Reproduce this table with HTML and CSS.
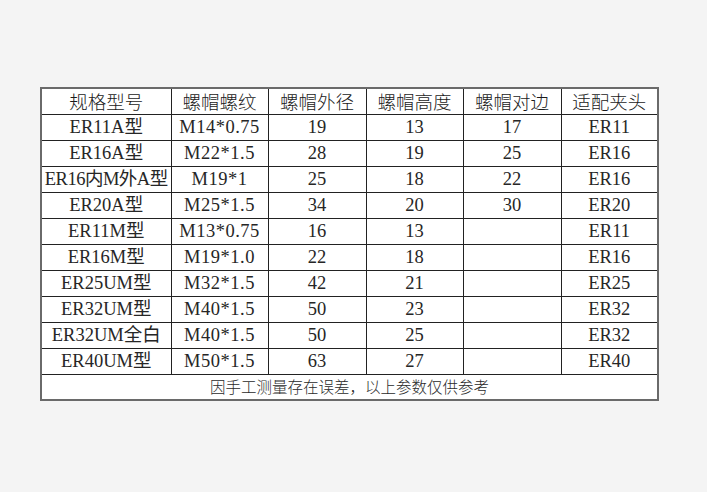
FILE: index.html
```html
<!DOCTYPE html>
<html lang="zh">
<head>
<meta charset="utf-8">
<link rel="stylesheet" href="styles.css">
</head>
<body>
<div class="page">
<table class="spec">
<colgroup>
<col class="c1"><col class="c2"><col class="c3"><col class="c4"><col class="c5"><col class="c6">
</colgroup>
<thead>
<tr class="head"><th>规格型号</th><th>螺帽螺纹</th><th>螺帽外径</th><th>螺帽高度</th><th>螺帽对边</th><th>适配夹头</th></tr>
</thead>
<tbody>
<tr><td>ER11A型</td><td class="thread">M14*0.75</td><td>19</td><td>13</td><td>17</td><td>ER11</td></tr>
<tr><td>ER16A型</td><td class="thread">M22*1.5</td><td>28</td><td>19</td><td>25</td><td>ER16</td></tr>
<tr><td class="tight">ER16内M外A型</td><td class="thread">M19*1</td><td>25</td><td>18</td><td>22</td><td>ER16</td></tr>
<tr><td>ER20A型</td><td class="thread">M25*1.5</td><td>34</td><td>20</td><td>30</td><td>ER20</td></tr>
<tr><td>ER11M型</td><td class="thread">M13*0.75</td><td>16</td><td>13</td><td></td><td>ER11</td></tr>
<tr><td>ER16M型</td><td class="thread">M19*1.0</td><td>22</td><td>18</td><td></td><td>ER16</td></tr>
<tr><td>ER25UM型</td><td class="thread">M32*1.5</td><td>42</td><td>21</td><td></td><td>ER25</td></tr>
<tr><td>ER32UM型</td><td class="thread">M40*1.5</td><td>50</td><td>23</td><td></td><td>ER32</td></tr>
<tr><td>ER32UM全白</td><td class="thread">M40*1.5</td><td>50</td><td>25</td><td></td><td>ER32</td></tr>
<tr><td>ER40UM型</td><td class="thread">M50*1.5</td><td>63</td><td>27</td><td></td><td>ER40</td></tr>
<tr class="foot"><td colspan="6">因手工测量存在误差，以上参数仅供参考</td></tr>
</tbody>
</table>
</div>
</body>
</html>
```
FILE: styles.css
```css
html, body {
  margin: 0;
  padding: 0;
  background: #f4f4f4;
}
.page {
  padding: 87px 0 0 40px;
}
.spec {
  border-collapse: collapse;
  table-layout: fixed;
  width: 619px;
  background: #fff;
  border: 2px solid #6a6a6a;
  color: #262626;
  font-family: "Liberation Serif", "Noto Sans CJK SC", serif;
  font-size: 18.5px;
}
.c1 { width: 130px; }
.c2 { width: 97px; }
.c3 { width: 98px; }
.c4 { width: 97px; }
.c5 { width: 98px; }
.c6 { width: 97px; }
.spec th, .spec td {
  border: 1px solid #222;
  padding: 0;
  text-align: center;
  vertical-align: middle;
  white-space: nowrap;
  overflow: hidden;
  line-height: 1;
}
.spec td:nth-child(3) { border-left-color: #555; }
.spec th {
  font-family: "Noto Sans CJK SC", sans-serif;
  font-weight: 300;
  font-size: 18.5px;
  height: 25px;
  color: #1a1a1a;
}
.spec tbody tr { height: 25.8px; }
.spec td { height: 25px; }
.spec td.thread { letter-spacing: 0.5px; }
.spec td.tight { letter-spacing: -0.5px; }
.spec tr.foot td {
  height: 21px;
  font-family: "Noto Sans CJK SC", sans-serif;
  font-weight: 300;
  font-size: 15.5px;
  color: #2a2a2a;
  letter-spacing: 0;
}
```
